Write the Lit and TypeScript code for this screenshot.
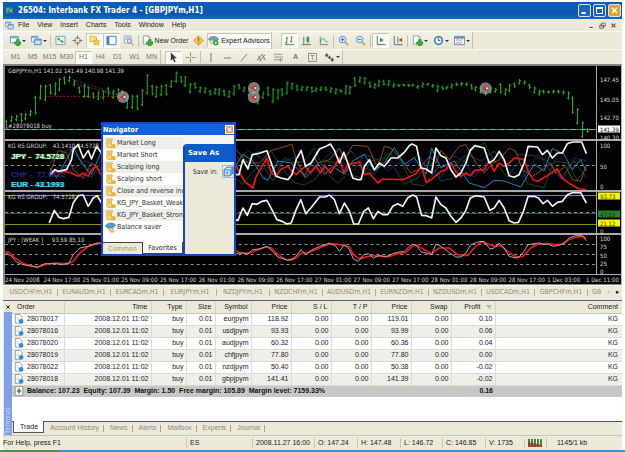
import { LitElement, html, svg, css, nothing, TemplateResult, SVGTemplateResult } from "lit";
import { customElement, state } from "lit/decorators.js";
import { classMap } from "lit/directives/class-map.js";

/* Hourly bars as [high, low] in plot units, three units to a price pixel. */
const BARS = `161,191 149,169 146,166 141,169 141,163 131,151 89,146 56,101 56,106 53,86 49,89 36,76 31,56 29,49 41,61 61,83 53,96 61,96 79,99 76,103 73,101 63,89 71,99 66,96 71,101 86,129 86,129 86,133 69,121 24,86 56,89 59,96 56,91 53,89 41,66 16,51 29,51 29,63 51,83 49,69 61,81 63,83 71,89
66,86 66,89 71,91 73,96 56,89 53,71 61,79 66,91 66,96 66,116 76,99 61,91 66,111 69,101 66,91 46,86 49,71 56,76 59,76 59,76 61,81 63,79 61,76 61,76 63,81 66,86 69,81 56,86 59,86 33,63 31,51 33,56 46,66 51,69 41,63 41,59 41,61 51,66 53,63 53,61 53,63 53,61
56,69 49,66 51,59 53,66 56,79 59,73 59,71 53,69 49,61 47,61 49,61 53,71 59,76 61,83 61,89 61,83 66,81 51,83 66,89 53,79 49,66 39,56 43,56 53,69 61,83 71,89 71,83 73,83 71,83 71,83 73,86 76,101 91,143 126,176 166,216 186,201`
  .split(/\s+/)
  .map((p) => p.split(",").map(Number));

const STRENGTH = [
  { cls: "navy", pts: "135,100 165,70 200,90 240,60 290,80 690,60 730,30 770,50 800,90 840,60 870,50 900,110 940,70 980,34 1010,60 1050,90 1080,40 1110,50 1150,90 1180,66 1215,70 1240,40 1275,90 1310,110 1345,44 1380,60 1410,110 1450,60 1490,40 1520,90 1560,110 1600,40 1640,90 1680,110 1710,50 1747,60" },
  { cls: "green", pts: "135,66 165,40 195,24 230,60 260,110 290,60 690,110 715,130 745,90 775,70 805,120 840,50 870,66 900,60 930,20 960,90 1000,126 1030,100 1070,110 1100,60 1140,50 1170,80 1200,130 1240,110 1275,60 1310,120 1345,112 1400,30 1440,6 1470,60 1510,110 1545,60 1570,128 1620,140 1650,60 1690,66 1720,118 1747,80" },
  { cls: "green", pts: "690,40 720,70 755,34 800,30 830,80 870,126 900,132 935,112 965,60 1000,66 1040,30 1070,66 1110,102 1150,36 1190,60 1225,130 1260,134 1300,80 1350,70 1390,40 1430,60 1470,30 1510,74 1540,40 1590,44 1630,60 1670,112 1710,60 1747,110" },
  { cls: "orange", pts: "135,96 160,28 185,36 205,86 235,111 260,66 285,86 690,21 730,66 765,66 800,28 845,16 862,9 875,56 903,111 940,66 975,56 1005,21 1020,56 1045,13 1090,16 1120,81 1140,16 1160,21 1190,56 1220,96 1245,84 1275,46 1295,66 1310,28 1335,56 1365,16 1385,11 1415,66 1440,96 1465,66 1485,56 1515,21 1535,31 1555,86 1585,106 1615,86 1640,66 1655,96 1685,76 1705,116 1730,121 1747,71" },
  { cls: "teal", pts: "135,80 155,110 185,56 205,18 230,66 260,100 290,30 690,80 715,40 745,60 775,110 790,118 820,60 860,66 900,104 930,50 960,100 985,76 1020,100 1045,60 1080,40 1110,90 1140,66 1170,20 1200,70 1230,50 1265,100 1282,22 1310,80 1350,60 1395,126 1440,140 1470,118 1500,120 1550,138 1590,70 1620,90 1645,22 1680,40 1705,86 1730,56 1747,90" },
  { cls: "red", pts: "135,106 150,91 165,96 180,91 200,96 220,106 235,96 250,106 260,86 275,76 288,101 690,64 700,86 720,121 745,141 755,106 787,51 800,96 815,106 830,84 850,76 862,91 875,101 890,86 903,76 918,96 935,76 948,96 962,76 978,96 1005,51 1018,96 1030,71 1065,63 1080,101 1095,96 1120,126 1135,114 1195,116 1235,98 1252,76 1265,124 1281,116 1310,91 1325,86 1340,66 1355,91 1370,106 1385,96 1398,104 1412,88 1440,86 1455,61 1470,91 1485,66 1500,76 1515,66 1530,51 1560,56 1572,91 1587,116 1601,121 1630,104 1659,84 1674,111 1700,130 1725,144 1747,146" },
  { cls: "white", pts: "135,101 150,86 160,91 185,86 200,56 205,26 220,11 235,51 250,28 260,54 275,16 290,36 690,101 703,101 715,56 730,84 743,41 760,38 787,29 800,66 815,106 830,111 850,116 862,101 875,56 890,28 903,76 920,66 945,24 965,16 978,9 990,28 1005,66 1018,34 1030,66 1045,111 1060,116 1070,116 1080,76 1095,56 1110,86 1125,66 1140,76 1160,51 1180,51 1200,34 1215,14 1223,9 1237,16 1250,81 1265,84 1282,96 1295,21 1310,44 1325,51 1340,86 1355,108 1370,96 1385,66 1398,28 1412,14 1440,21 1455,66 1470,56 1485,31 1500,56 1515,104 1530,109 1545,101 1560,66 1572,16 1600,18 1615,41 1630,28 1645,51 1660,36 1675,36 1690,8 1705,3 1733,3 1747,38" },
];

const GROUP_LINE =
  "133,93 148,55 162,76 175,80 192,76 205,33 220,11 235,9 250,43 265,18 277,11 290,33 675,81 700,85 715,48 728,70 743,35 757,37 772,28 787,25 802,53 817,83 833,88 847,96 860,93 875,53 889,23 904,65 919,48 945,15 963,15 975,9 990,23 1005,65 1020,33 1035,58 1048,96 1062,96 1078,58 1092,48 1107,80 1121,58 1135,68 1150,68 1165,43 1180,35 1195,43 1210,18 1225,9 1237,15 1252,70 1267,71 1282,78 1295,15 1310,38 1325,48 1340,73 1355,91 1370,78 1385,55 1398,18 1415,11 1440,15 1457,55 1470,48 1485,25 1500,48 1515,86 1530,93 1543,91 1558,58 1572,13 1590,13 1603,18 1617,35 1630,25 1645,43 1660,31 1675,28 1690,8 1705,2 1730,2 1747,33";
const WEAK_RED =
  "2,49 15,54 30,69 50,82 65,89 95,96 120,89 150,84 190,86 205,79 225,54 250,34 275,26 290,24 690,44 705,54 735,54 760,44 785,36 800,39 820,59 840,72 860,76 875,69 890,54 915,52 945,39 975,26 995,27 1020,32 1035,36 1047,59 1063,71 1080,67 1105,62 1130,64 1155,64 1180,56 1205,52 1223,34 1235,29 1250,38 1282,56 1305,39 1335,39 1360,59 1390,62 1410,39 1430,21 1450,26 1470,34 1490,32 1510,49 1535,66 1557,64 1580,39 1602,27 1630,26 1650,29 1675,27 1695,14 1715,7 1735,4 1747,9";
const WEAK_GREY =
  "2,54 20,64 35,82 55,89 80,94 100,97 120,86 150,86 175,89 192,84 205,59 225,39 250,34 275,24 690,59 703,54 715,54 730,57 743,44 765,42 787,34 805,49 820,66 850,76 870,69 890,44 903,59 920,46 945,34 975,25 993,32 1005,49 1020,29 1035,44 1047,72 1062,79 1078,59 1092,56 1107,69 1125,61 1145,66 1165,56 1180,52 1200,49 1215,34 1225,27 1237,32 1250,50 1265,54 1282,59 1295,27 1310,34 1330,49 1355,66 1370,66 1385,54 1400,29 1425,20 1440,19 1457,42 1470,39 1485,24 1500,39 1515,64 1535,69 1545,66 1560,49 1572,29 1590,26 1605,24 1620,29 1632,27 1648,34 1665,31 1682,24 1695,9 1715,2 1735,2 1747,17";

const MARKERS = [[355, 93], [748, 66], [748, 94], [1444, 67]];

const TIMES = ["24 Nov 2008", "24 Nov 17:00", "25 Nov 01:00", "25 Nov 09:00", "25 Nov 17:00", "26 Nov 01:00", "26 Nov 09:00", "26 Nov 17:00", "27 Nov 01:00", "27 Nov 09:00", "27 Nov 17:00", "28 Nov 01:00", "28 Nov 09:00", "28 Nov 17:00", "1 Dec 03:00", "1 Dec 11:00"];

const CHART_TABS = ["USDCHFm,H1", "EURAUDm,H1", "EURCADm,H1", "EURJPYm,H1", "NZDJPYm,H1", "NZDCHFm,H1", "AUDUSDm,H1", "EURNZDm,H1", "NZDUSDm,H1", "USDCADm,H1", "GBPCHFm,H1"];

const ORDERS = [
  ["28078017", "2008.12.01 11:02", "buy", "0.01", "eurjpym", "118.92", "0.00", "0.00", "119.01", "0.00", "0.10", "KG"],
  ["28078016", "2008.12.01 11:02", "buy", "0.01", "usdjpym", "93.93", "0.00", "0.00", "93.99", "0.00", "0.06", "KG"],
  ["28078020", "2008.12.01 11:02", "buy", "0.01", "audjpym", "60.32", "0.00", "0.00", "60.36", "0.00", "0.04", "KG"],
  ["28078019", "2008.12.01 11:02", "buy", "0.01", "chfjpym", "77.80", "0.00", "0.00", "77.80", "0.00", "0.00", "KG"],
  ["28078022", "2008.12.01 11:02", "buy", "0.01", "nzdjpym", "50.40", "0.00", "0.00", "50.38", "0.00", "-0.02", "KG"],
  ["28078018", "2008.12.01 11:02", "buy", "0.01", "gbpjpym", "141.41", "0.00", "0.00", "141.39", "0.00", "-0.02", "KG"],
];
const COLUMNS = ["Order", "Time", "Type", "Size", "Symbol", "Price", "S / L", "T / P", "Price", "Swap", "Profit", "Comment"];

const plus = svg`<path d="M7 5h3v2.500h2v2.500h-2v2h-3v-2h-2v-2.500h2z" fill="#2fb52f" stroke="#14801a" stroke-width=".6"/>`;
const page = svg`<path d="M1.500 1h5.500l2 2v7h-7.500z" fill="#fff" stroke="#7d8690" stroke-width=".8"/><path d="M7 1v2h2" fill="none" stroke="#7d8690" stroke-width=".6"/>`;

const ICONS: Record<string, SVGTemplateResult> = {
  newchart: svg`<path d="M.5 1.500h8.500v7h-8.500z" fill="#fff" stroke="#6c8fb0"/><path d="M1 3h8" stroke="#79a7d8" stroke-width="1.500"/>${plus}`,
  profiles: svg`<path d="M.5 1.500h7v6h-7z" fill="#e8f2fc" stroke="#5d93c9"/><path d="M1 2.500h6" stroke="#5d93c9"/><path d="M4 4.500h7v6h-7z" fill="#cfe4f8" stroke="#4785c4"/><path d="M4 5.500h7" stroke="#4785c4"/>`,
  market: svg`<path d="M1 1.500h10v9h-10z" fill="#eaf5fb" stroke="#6d9cc4"/><path d="M3 3.500l2 2M6 6l3 2" stroke="#2c9d3c" stroke-width="1.800"/>`,
  data: svg`<circle cx="6" cy="6" r="3.200" fill="none" stroke="#77736a"/><path d="M6 .5v4M6 7.500v4M.5 6h4M7.500 6h4" stroke="#77736a"/>`,
  folder: svg`<path d="M1 1h3l1 1h3v5h-7z" fill="#ffe680" stroke="#c89a1c" stroke-width=".7"/><path d="M8 4l1.300 2.300 2.500.2-1.800 1.900.5 2.600-2.500-1.200-2.300 1.200.4-2.600-1.800-1.900 2.500-.2z" fill="#ffd23a" stroke="#bb8a10" stroke-width=".6"/>`,
  terminal: svg`<path d="M1 1.500h10v9h-10z" fill="#fff" stroke="#3d7cc8"/><path d="M2.500 2v8" stroke="#3d7cc8" stroke-width="2.500"/>`,
  tester: svg`<path d="M1.500 1h7v8h-7z" fill="#eef2f6" stroke="#8b98a8" stroke-width=".8"/><path d="M3 3h4M3 5h2" stroke="#8b98a8"/><circle cx="7" cy="6.500" r="2.300" fill="#cfe6fa" stroke="#6e8fb4"/><path d="M8.700 8.500l2.500 2.800" stroke="#c8a038" stroke-width="1.300"/>`,
  order: svg`${page}${plus}`,
  diamond: svg`<path d="M6 .8l5.200 5.200-5.200 5.200-5.200-5.200z" fill="#f7c94a" stroke="#c4881a" stroke-width=".8"/><path d="M6 3v3.500M6 7.800v1.200" stroke="#8b5a10" stroke-width="1.300"/>`,
  expert: svg`<path d="M.5 5c1-4 9-5 11 0l-3 1.500-5 .5z" fill="#5aa4e0" stroke="#2b6cae" stroke-width=".6"/><circle cx="4" cy="8" r="2.500" fill="#f1cf86"/><circle cx="8.500" cy="8.500" r="3" fill="#2fae3a"/><path d="M7.500 7l2.500 1.500-2.500 1.500z" fill="#fff"/>`,
  bars: svg`<path d="M3 2v8M1 8.500h2M3 3.500h1.500M8 1.500v7M6.500 7h1.500M8 3h1.500M1 10.500h10" stroke="#3a8a52" fill="none"/>`,
  candle: svg`<path d="M3 2v8M1 10.500h10M7.500 1v8" stroke="#5b6b60" fill="none"/><path d="M6 2.500h3v5h-3z" fill="#1fa838"/>`,
  line: svg`<path d="M2.500 1.500v9h8.500" stroke="#6f7f78" fill="none"/><path d="M2.500 7.500c2-5 4-4 5-2s2 2 3 2" stroke="#2e9a50" fill="none"/>`,
  zoomin: svg`<circle cx="5" cy="5" r="3.600" fill="#d6ebfb" stroke="#5592cf"/><path d="M3.200 5h3.600M5 3.200v3.600" stroke="#2a6db8"/><path d="M8 8l3.200 3.200" stroke="#d0a12e" stroke-width="1.800"/>`,
  zoomout: svg`<circle cx="5" cy="5" r="3.600" fill="#d6ebfb" stroke="#5592cf"/><path d="M3.200 5h3.600" stroke="#2a6db8"/><path d="M8 8l3.200 3.200" stroke="#d0a12e" stroke-width="1.800"/>`,
  scroll: svg`<path d="M2.500 1v9.500h9" stroke="#55665c" fill="none"/><path d="M5.500 3l4 2.500-4 2.500z" fill="#1e9c38"/>`,
  shift: svg`<path d="M2.500 1v9.500h9M6.500 2v7" stroke="#3f6d9c" fill="none"/><path d="M11 3l-3.500 2.500 3.500 2.500z" fill="#cf3a22"/>`,
  indicator: svg`${page}${plus}`,
  clock: svg`<circle cx="6" cy="6" r="5" fill="#2f74c8"/><circle cx="6" cy="6" r="3.400" fill="#f2f8fe"/><path d="M6 3.500v2.700h2" stroke="#1d4f92" fill="none"/>`,
  template: svg`<path d="M.5 1.500h11v9h-11z" fill="#f4f9fe" stroke="#5c8fc6"/><path d="M.5 3h11" stroke="#5c8fc6" stroke-width="1.800"/><path d="M2 6l2-1 2 1 3-1M2 9l2-1 2 1 3-1" stroke="#b3644a" fill="none" stroke-width=".8"/>`,
  cursor: svg`<path d="M3 .5v9l2.200-2 1.600 3.700 1.500-.7-1.600-3.600h3z" fill="#3a3a3a"/>`,
  cross: svg`<path d="M6 .5v4.500M6 7v4.500M.5 6h4.500M7 6h4.500" stroke="#8a877c"/>`,
  vline: svg`<path d="M6.500 1v10" stroke="#77746a"/>`,
  hline: svg`<path d="M2 6.500h8" stroke="#77746a"/>`,
  trend: svg`<path d="M2 10l7-8" stroke="#77746a"/>`,
  channel: svg`<path d="M1 9l6-7M4 10l6-7M3 4l2 6M7 3l3 6" stroke="#77746a" fill="none"/>`,
  fibo: svg`<path d="M1 2.500h9M2 5.500h9M1 8.500h10M8 7v4" stroke="#77746a" stroke-dasharray="2 .6"/>`,
  arrows: svg`<path d="M3 1l2 2.500-2 2.500-2-2.500zM6 4l2 2-2 2-2-2zM9 6l2 2.500-2 2.500-2-2.500z" fill="#5c5a52"/>`,
  doc: svg`<path d="M1.500 .5h5.500l2.500 2.500v8h-8z" fill="#fff" stroke="#5f7186" stroke-width=".8"/><path d="M3 5h4M3 7h3" stroke="#a9bccf" stroke-width=".7"/><circle cx="8.500" cy="8.800" r="2.800" fill="#2a8fd8"/>`,
  balance: svg`<path d="M1.500 .5h9v11h-9z" fill="#f4f4f4" stroke="#777" stroke-width=".8"/><path d="M6 3v6M3.500 6h5" stroke="#1c9a2c" stroke-width="1.800"/>`,
  script: svg`<path d="M2 1h6v1.500h-1v5h4v3h-7c-1.500 0-2-1-2-2z" fill="#f9d766" stroke="#c9972a" stroke-width=".7"/><circle cx="9" cy="9" r="2.200" fill="#e9b43a"/><path d="M3.500 3.500h2.500M3.500 5.500h2.500" stroke="#c9972a" stroke-width=".7"/>`,
  saver: svg`<path d="M.5 4.500c2-4 9-4.500 11-1l-3 3-5 .5z" fill="#4d9bdc" stroke="#245f9c" stroke-width=".6"/><path d="M4 6.500h4.500c.5 3 2 3 1 4.500-3 1-6-1-5.500-4.500z" fill="#efc579" stroke="#b98432" stroke-width=".5"/>`,
  app: svg`<path d="M1 1h10v10h-10z" fill="#1e6a6a"/><path d="M2.500 9v-6h4M3 5.500h3M6 9l4-6M6.500 4l3.500 5" stroke="#9be0c0" fill="none"/>`,
  disk: svg`<path d="M4 1h7v6.500l-3 3.500h-7v-7z" fill="#5aa2e6" stroke="#1f5da8" stroke-width=".7"/><path d="M2 5h5.500v5h-5.500zM4.500 2h5l-1.500 1.500h-5z" fill="#d9eafb"/><path d="M3 6.500h3M3 8h3" stroke="#1f5da8" stroke-width=".7"/>`,
};

const icon = (name: string) =>
  html`<svg class="icon" viewBox="0 0 12 12" aria-hidden="true">${ICONS[name]}</svg>`;

interface Tool { id: string; title: string; text?: string; menu?: boolean; on?: boolean; sep?: boolean; }
const TOOLS: Tool[] = [
  { id: "newchart", title: "New chart", menu: true },
  { id: "profiles", title: "Profiles", menu: true, sep: true },
  { id: "market", title: "Market Watch" },
  { id: "data", title: "Data window" },
  { id: "folder", title: "Navigator", on: true },
  { id: "terminal", title: "Terminal", on: true },
  { id: "tester", title: "Strategy Tester", sep: true },
  { id: "order", title: "New Order", text: "New Order" },
  { id: "diamond", title: "MetaEditor" },
  { id: "expert", title: "Expert Advisors", text: "Expert Advisors", on: true },
];
const CHART_TOOLS: Tool[] = [
  { id: "bars", title: "Bar chart", on: true },
  { id: "candle", title: "Candlesticks" },
  { id: "line", title: "Line chart", sep: true },
  { id: "zoomin", title: "Zoom in" },
  { id: "zoomout", title: "Zoom out", sep: true },
  { id: "scroll", title: "Auto scroll", on: true },
  { id: "shift", title: "Chart shift", sep: true },
  { id: "indicator", title: "Indicators", menu: true },
  { id: "clock", title: "Periods", menu: true },
  { id: "template", title: "Templates", menu: true },
];
const DRAW_TOOLS: Tool[] = [
  { id: "cursor", title: "Cursor", on: true },
  { id: "cross", title: "Crosshair", sep: true },
  { id: "vline", title: "Vertical line" },
  { id: "hline", title: "Horizontal line" },
  { id: "trend", title: "Trendline" },
  { id: "channel", title: "Channel" },
  { id: "fibo", title: "Fibonacci" },
];

@customElement("app-root")
export class AppRoot extends LitElement {
  @state() private period = "H1";
  @state() private tab = "Trade";

  static styles = css`
    :host { display: block; padding: 2px 3px 0; background: #fdfdfb; color: #222;
      font: 7px/12px "Liberation Sans", Arial, sans-serif; white-space: nowrap; }
    * { box-sizing: border-box; }
    button { font: inherit; color: inherit; background: none; border: 0; margin: 0; padding: 0;
      display: inline-flex; align-items: center; justify-content: center; }
    .icon { width: 11px; height: 11px; flex: none; display: block; }

    .title { display: flex; align-items: center; height: 17px; padding: 0 1px 0 2px; gap: 2px;
      background: linear-gradient(#0a5cc0, #0b57ae 70%, #1268d8); color: #fff; }
    .title .icon { width: 9px; height: 9px; }
    .title h1 { flex: 1; margin: 0; padding-left: 2px; font: bold 8px/17px "DejaVu Sans Condensed", "Liberation Sans", sans-serif; }
    .caption { width: 13px; height: 13px; border: 1px solid #d5e2f8; border-radius: 2px; background: #1a64c8; }
    .caption svg { width: 9px; height: 9px; }
    .caption.close { background: #e6a02c; }

    .menu { display: flex; align-items: center; height: 12px; background: #ece9d8; padding: 0 3px 0 2px; }
    .menu .icon { width: 9px; height: 9px; margin-right: 4px; }
    .menu .item { margin-right: 8px; }
    .menu .fill { flex: 1; }
    .mdi { width: 11px; color: #555; }
    .mdi svg { width: 7px; height: 7px; }

    .bar { display: flex; align-items: center; height: 18px; background: #ece9d8; border-top: 1px solid #fbfaf4; }
    .bar.low { height: 15px; }
    .group { display: flex; align-items: center; height: 100%; padding-left: 4px;
      border-right: 1px solid #c5c2b2; background: linear-gradient(#f3f1e6, #e8e5d3); }
    .tool { width: 17px; height: 15px; border: 1px solid transparent; flex: none; }
    .low .tool { height: 13px; color: #77746a; }
    .tool.drop { width: 21px; gap: 1px; }
    .tool.wide { width: 50px; gap: 2px; }
    .tool.wide.on { width: 64px; }
    .bar:not(.low) .group + .group { padding-left: 9px; }
    .tool.on { background: #f8f7f1; border-color: #c9c6b8 #fff #fff #c9c6b8; }
    .drop::after { content: ""; border: 2px solid transparent; border-top-color: #333; border-bottom: 0; }
    .sep { width: 4px; height: 12px; border-left: 1px solid #c5c2b2; margin-left: 1px; margin-right: -2px; }
    .letter { font-weight: bold; }
    .boxed { border: 1px solid #99968a; line-height: 7px; padding: 0 1px; font-weight: normal; }

    .chart { position: relative; background: #020204; border: 1px solid #8a897f; border-left: 2px solid #8a897f;
      border-right: 1px solid #b9b7aa; color: #d6d6d6; font: 6px/8px "DejaVu Sans Condensed", "Liberation Sans", sans-serif; }
    .panel { display: grid; grid-template-columns: 1fr 24px; border-bottom: 2px solid #a9a9ab; }
    .panel.last { border-bottom: 1px solid #a9a9ab; }
    .plot { position: relative; border-right: 1px solid #a9a9ab; min-width: 0; }
    .plot svg { display: block; width: 100%; }
    .price { border-top: 1px solid #77787a; }
    .price .plot svg { height: 73px; }
    .rs .plot svg { height: 49px; }
    .group-panel .plot svg { height: 41px; }
    .last .plot svg { height: 39px; }
    .axis { position: relative; }
    .axis span { position: absolute; left: 3px; line-height: 7px; transform: translateY(-50%); }
    .axis .box { left: 1px; right: 1px; padding-left: 2px; background: #fff; color: #111; }
    .axis .yellow { background: #f5f500; color: #443; }
    .axis .dark { background: #2d7d2d; color: #0d330d; }
    .note { position: absolute; left: 3px; top: 1px; white-space: pre; }
    .note.bottom { top: auto; bottom: 9px; }
    .legend { position: absolute; left: 6px; top: 11px; font: bold 8px/10px "Liberation Sans", sans-serif; }
    .legend div { white-space: pre; }
    .l-jpy { color: #e8f5e8; text-shadow: 1px 0 1px #2f9a40, -1px 0 1px #2f9a40; margin-bottom: 8px; }
    .l-chf { color: #1b2c86; }
    .l-eur { color: #35e6f2; text-shadow: 1px 0 0 #1878a8; }
    .times { display: grid; grid-template-columns: repeat(15, minmax(0, 1fr)) 35px; height: 9px; align-items: center; }
    .times span { overflow: visible; }

    polyline { fill: none; stroke-width: 3; stroke-linejoin: round; }
    .white { stroke: #f2f2f2; stroke-width: 5; }
    .red { stroke: #f01414; stroke-width: 5; }
    .orange { stroke: #8c4c16; }
    .teal { stroke: #1c86b8; }
    .green { stroke: #17452c; }
    .navy { stroke: #16246e; }
    .grey { stroke: #a8a8a8; }
    .crisp { shape-rendering: crispEdges; }

    .navigator { position: absolute; left: 96px; top: 57px; width: 135px; height: 134px; border: 2px solid #1445d2;
      background: #f5f4ee; color: #333; font: 7px/12px "DejaVu Sans Condensed", "Liberation Sans", sans-serif; display: flex; flex-direction: column; }
    .navigator header { display: flex; align-items: center; justify-content: space-between; height: 11px;
      background: #0f62e0; color: #fff; font-weight: bold; flex: none; }
    .navigator .x { width: 9px; height: 9px; background: #f0a040; border: 1px solid #fff; color: #fff; }
    .navigator .x svg { width: 7px; height: 7px; }
    .body { flex: 1; display: grid; grid-template-columns: 80px 1fr; min-height: 0; }
    .left { display: flex; flex-direction: column; min-width: 0; background: #fdfdfb; padding-top: 2px; }
    .left ul { margin: 0; padding: 0; list-style: none; flex: 1; }
    .left li { display: flex; align-items: center; gap: 1px; height: 12px; padding-left: 2px; }
    .left li:nth-child(odd):not(:last-child) { background: #eeeeea; }
    .pages { display: flex; border-top: 1px solid #444; background: #ece9d8; height: 12px; }
    .pages button { flex: 1; color: #9c998c; }
    .pages .active { background: #fdfdfb; color: #222; border: 1px solid #444; border-top: 0; margin-top: -1px; }
    .save { margin-top: 9px; background: #ece9d8; border-left: 2px solid #1445d2; border-top-left-radius: 4px; overflow: hidden; }
    .save h2 { margin: 0; height: 18px; padding-left: 3px; background: #0d5bc4; color: #fff;
      font: bold 7px/18px "DejaVu Sans", "Liberation Sans", sans-serif; }
    .save label { display: flex; align-items: center; justify-content: flex-end; gap: 4px; margin-top: 3px; }
    .save .pick { width: 12px; height: 13px; border: 1px solid #9fb4cf; background: #fff; }

    .tabs { display: flex; align-items: center; height: 16px; background: #ece9d8; color: #8f8b7e; padding: 0 0 2px 2px;
      border-top: 1px solid #fff; border-bottom: 1px solid #5a5a8c; overflow: hidden;
      font-family: "DejaVu Sans Condensed", "Liberation Sans", sans-serif; }
    .tabs button { width: 53px; flex: 0 1 53px; border-right: 1px solid #b1ae9f; line-height: 7px; }
    .tabs .cut { flex: 1; justify-content: flex-start; padding-left: 4px; border: 0; }
    .tabs .arrow { flex: 0 0 9px; border: 0; }
    .tabs .fwd { color: #111; }

    .term { display: grid; grid-template-columns: 9px 1fr; background: #fff; }
    .side { display: flex; flex-direction: column; align-items: center; background: #ece9d8; }
    .side button { height: 11px; width: 8px; color: #222; }
    .side svg { width: 6px; height: 6px; }
    .side span { flex: 1; width: 8px; writing-mode: vertical-rl; transform: rotate(180deg); background: #7f9fe6;
      color: #c4d4f8; line-height: 8px; padding-top: 1px; }
    .main { min-width: 0; display: flex; flex-direction: column; }
    table { width: 100%; border-collapse: collapse; table-layout: fixed; }
    th { height: 12px; padding: 0 3px 0 0; background: #ece9d8; font-weight: normal; text-align: right;
      border-bottom: 1px solid #c9c6b6; border-right: 1px solid #d6d3c4; line-height: 10px; }
    td { height: 12px; padding: 0 2px 0 0; text-align: right; border-right: 1px solid #dedcd2;
      border-bottom: 1px solid #dcdad0; line-height: 10px; }
    th:first-child { text-align: left; padding-left: 5px; }
    td:first-child { text-align: left; padding-left: 2px; }
    th:last-child, td:last-child { border-right: 0; padding-right: 4px; }
    tbody tr:nth-child(even) { background: #efefea; }
    tfoot tr { background: #c6c8c6; font-weight: bold; color: #111; }
    tfoot td { border: 0; height: 12px; }
    .cell { display: flex; align-items: center; gap: 3px; white-space: pre; }
    .cell .icon { width: 10px; height: 10px; }
    .sort { display: inline-block; border: 3px solid transparent; border-top: 4px solid #b9b6a8; border-bottom: 0; margin-left: 5px; }
    .c-order { width: 52px; } .c-time { width: 87px; } .c-type { width: 35px; } .c-size { width: 29px; }
    .c-symbol { width: 36px; } .c-num { width: 40px; } .c-profit { width: 44px; }
    .blank { height: 24px; }
    .pane-tabs { display: flex; height: 14px; background: #ece9d8; border-top: 1px solid #4a4f96; color: #8f8b7e; align-items: flex-start; padding-left: 1px; }
    .pane-tabs button { height: 10px; margin-top: 1px; padding: 0 5px 0 6px; line-height: 8px; position: relative; }
    .pane-tabs button:not(.active)::after { content: ""; width: 1px; height: 7px; background: #a5a294; position: absolute; right: 0; top: 2px; }
    .pane-tabs .active { background: #fff; color: #222; border: 1px solid #55554f; border-top: 0; height: 12px; margin-top: -1px; }

    .status { display: grid; grid-template-columns: minmax(0, 1fr) 66px 62px 43px 43px 42px 43px 39px 22px 76px;
      height: 15px; align-items: center; background: #ece9d8; border-top: 1px solid #c9c6b6; }
    .status span { border-left: 1px solid #c9c6b6; padding-left: 3px; line-height: 10px; }
    .status span:first-child { border: 0; padding: 0; }
    .status .kb { padding-left: 10px; }
    .status svg { width: 14px; height: 8px; display: block; }
    .taskbar { height: 2px; margin: 0 -3px; background: linear-gradient(90deg, #3c9c3c 58px, #17a0e6 60px); }
  `;

  private tools(list: Tool[]): TemplateResult[] {
    return list.map((t) => html`<button
        class=${classMap({ tool: true, on: !!t.on, drop: !!t.menu, wide: !!t.text })}
        title=${t.title} aria-label=${t.title}>${icon(t.id)}${t.text ?? nothing}</button>${t.sep
        ? html`<i class="sep"></i>` : nothing}`);
  }

  private dash(y: number, color = "#8f8f96") {
    return svg`<path class="crisp" d="M0 ${y}H1776" stroke=${color} stroke-width="3" stroke-dasharray="9 9"/>`;
  }

  private axis(labels: [string, number, string?][]) {
    return html`<div class="axis">${labels.map(([t, pos, cls]) =>
      html`<span class=${cls ?? ""} style="top:${pos}%">${t}</span>`)}</div>`;
  }

  private priceBars() {
    return BARS.map(([hi, lo], i) => {
      const x = 3 + Math.round((i * 14.55) / 3) * 3 + 1.5;
      const up = i % 3 !== 0;
      const open = up ? lo - 5 : hi + 5;
      const close = up ? hi + 5 : lo - 5;
      return svg`<path d="M${x} ${hi}V${lo}M${x - 4.5} ${open}H${x}M${x} ${close}H${x + 4.5}"/>`;
    });
  }

  private x(color: string) {
    return html`<svg viewBox="0 0 9 9" aria-hidden="true"><path d="M2 2l5 5M7 2l-5 5" stroke=${color} stroke-width="1.500"/></svg>`;
  }

  private renderChart() {
    return html`<main class="chart">
      <section class="panel price">
        <div class="plot">
          <svg viewBox="0 0 1776 219" preserveAspectRatio="none">
            <path d="M120 91H355M205 51L355 91" stroke="#a02020" stroke-width="3" stroke-dasharray="6 5" fill="none"/>
            <path d="M205 41L355 89" stroke="#20309a" stroke-width="3" stroke-dasharray="6 5"/>
            <path class="crisp" d="M0 190.500H1776" stroke="#3f8c6c" stroke-width="3"/>
            <path class="crisp" d="M0 190.500H1776" stroke="#8ab8a4" stroke-width="3" stroke-dasharray="15 12"/>
            <g class="crisp" stroke="#22b422" stroke-width="3" fill="none">${this.priceBars()}</g>
            ${MARKERS.map(([x, y]) => svg`<circle cx=${x} cy=${y} r="18" fill="#a5a0a0" fill-opacity=".75"/>
              <path d="M${x - 9} ${y}l14 -9v18z" fill="#e62020"/><circle cx=${x + 4} cy=${y} r="3" fill="#fff"/>`)}
          </svg>
          <span class="note">GBPJPYm,H1 141.02 141.49 140.98 141.39</span>
          <span class="note bottom">#28078018 buy</span>
        </div>
        ${this.axis([["147.45", 18], ["145.05", 45], ["142.70", 70], ["140.30", 97], ["141.39", 86, "box"]])}
      </section>
      <section class="panel rs">
        <div class="plot">
          <svg viewBox="0 0 1776 147" preserveAspectRatio="none">
            ${this.dash(73.5)}
            ${STRENGTH.map((s) => svg`<polyline class=${s.cls} points=${s.pts}/>`)}
          </svg>
          <span class="note">KG RS GROUP:   43.1410 74.5728</span>
          <div class="legend">
            <div class="l-jpy">JPY -  74.5728</div>
            <div class="l-chf">CHF -  77.6612</div>
            <div class="l-eur">EUR - 43.1993</div>
          </div>
        </div>
        ${this.axis([["100", 8], ["50", 50], ["0", 92]])}
      </section>
      <section class="panel group-panel">
        <div class="plot">
          <svg viewBox="0 0 1776 123" preserveAspectRatio="none">
            <path class="crisp" d="M0 10.500H1776M0 97.500H1776" stroke="#8f8f10" stroke-width="3"/>
            ${this.dash(61.5)}
            <path class="crisp" d="M0 64.500H1776" stroke="#1d5c2c" stroke-width="3"/>
            <polyline class="white" points=${GROUP_LINE}/>
          </svg>
          <span class="note">KG RS GROUP:   74.5728</span>
        </div>
        ${this.axis([["93.73", 10, "box yellow"], ["47.52", 54, "box dark"], ["21.12", 76, "box yellow"], ["0", 96]])}
      </section>
      <section class="panel last">
        <div class="plot">
          <svg viewBox="0 0 1776 117" preserveAspectRatio="none">
            ${this.dash(28.5)}${this.dash(58.5)}${this.dash(88.5)}
            <polyline class="red" points=${WEAK_RED}/>
            <polyline class="grey" points=${WEAK_GREY}/>
          </svg>
          <span class="note">JPY : [WEAK ]     93.59 85.10</span>
        </div>
        ${this.axis([["100", 8], ["75", 28], ["50", 50], ["25", 73], ["0", 92]])}
      </section>
      <div class="times">${TIMES.map((t) => html`<span>${t}</span>`)}</div>
      ${this.renderNavigator()}
    </main>`;
  }

  private renderNavigator() {
    const items = ["Market Long", "Market Short", "Scalping long", "Scalping short", "Close and reverse indi", "KG_JPY_Basket_Weak", "KG_JPY_Basket_Stron"];
    return html`<aside class="navigator">
      <header>Navigator<button class="x" aria-label="Close navigator">${this.x("#fff")}</button></header>
      <div class="body">
        <div class="left">
          <ul>${items.map((t) => html`<li>${icon("script")}${t}</li>`)}<li>${icon("saver")}Balance saver</li></ul>
          <div class="pages"><button>Common</button><button class="active">Favorites</button></div>
        </div>
        <div class="save">
          <h2>Save As</h2>
          <label>Save in: <button class="pick" aria-label="Choose folder">${icon("disk")}</button></label>
        </div>
      </div>
    </aside>`;
  }

  private renderTerminal() {
    const cols = ["order", "time", "type", "size", "symbol", "num", "num", "num", "num", "num", "profit"];
    return html`<section class="term">
      <div class="side"><button aria-label="Close terminal">${this.x("#222")}</button><span>Terminal</span></div>
      <div class="main">
        <table>
          <colgroup>${cols.map((c) => html`<col class="c-${c}">`)}<col></colgroup>
          <thead><tr>${COLUMNS.map((c) => html`<th scope="col">${c}${c === "Profit" ? html`<i class="sort"></i>` : nothing}</th>`)}</tr></thead>
          <tbody>${ORDERS.map((row) => html`<tr>${row.map((v, i) => i === 0
            ? html`<td><div class="cell">${icon("doc")}${v}</div></td>` : html`<td>${v}</td>`)}</tr>`)}</tbody>
          <tfoot><tr>
            <td colspan="10"><div class="cell">${icon("balance")}Balance: 107.23  Equity: 107.39  Margin: 1.50  Free margin: 105.89  Margin level: 7159.33%</div></td>
            <td>0.16</td><td></td>
          </tr></tfoot>
        </table>
        <div class="blank"></div>
        <nav class="pane-tabs">${["Trade", "Account History", "News", "Alerts", "Mailbox", "Experts", "Journal"].map((t) =>
          html`<button class=${classMap({ active: t === this.tab })} @click=${() => (this.tab = t)}>${t}</button>`)}</nav>
      </div>
    </section>`;
  }

  render() {
    return html`
      <header class="title">${icon("app")}<h1>26504: Interbank FX Trader 4 - [GBPJPYm,H1]</h1>
        <button class="caption" aria-label="Minimize"><svg viewBox="0 0 9 9"><path d="M1.500 7h4" stroke="#fff" stroke-width="2"/></svg></button>
        <button class="caption" aria-label="Maximize"><svg viewBox="0 0 9 9"><path d="M1.500 2h6v5.500h-6z" fill="none" stroke="#fff"/><path d="M1 2h7" stroke="#fff" stroke-width="2"/></svg></button>
        <button class="caption close" aria-label="Close">${this.x("#fff")}</button>
      </header>
      <nav class="menu">${icon("profiles")}
        ${["File", "View", "Insert", "Charts", "Tools", "Window", "Help"].map((m) => html`<button class="item">${m}</button>`)}
        <span class="fill"></span>
        <button class="mdi" aria-label="Minimize chart"><svg viewBox="0 0 9 9"><path d="M2 7h4" stroke="#555" stroke-width="1.500"/></svg></button>
        <button class="mdi" aria-label="Restore chart"><svg viewBox="0 0 9 9"><path d="M3 1.500h5v4h-5zM1 4h5v4h-5z" fill="#ece9d8" stroke="#555"/></svg></button>
        <button class="mdi" aria-label="Close chart">${this.x("#555")}</button>
      </nav>
      <div class="bar"><div class="group">${this.tools(TOOLS)}</div><div class="group">${this.tools(CHART_TOOLS)}</div></div>
      <div class="bar low">
        <div class="group">${["M1", "M5", "M15", "M30", "H1", "H4", "D1", "W1", "MN"].map((p) =>
          html`<button class=${classMap({ tool: true, on: p === this.period })} @click=${() => (this.period = p)}>${p}</button>`)}</div>
        <div class="group">${this.tools(DRAW_TOOLS)}
          <button class="tool letter" title="Text">A</button>
          <button class="tool" title="Text label"><span class="boxed">T</span></button>
          <button class="tool drop" title="Arrows" aria-label="Arrows">${icon("arrows")}</button>
        </div>
      </div>
      ${this.renderChart()}
      <nav class="tabs">${CHART_TABS.map((t) => html`<button>${t}</button>`)}<button class="cut">GB</button>
        <button class="arrow" aria-label="Scroll left">‹</button><button class="arrow fwd" aria-label="Scroll right">▸</button></nav>
      ${this.renderTerminal()}
      <footer class="status">
        <span>For Help, press F1</span><span>ES</span><span>2008.11.27 16:00</span>
        <span>O: 147.24</span><span>H: 147.48</span><span>L: 146.72</span><span>C: 146.85</span><span>V: 1735</span>
        <span><svg viewBox="0 0 14 8"><path d="M1 0v8M4 0v8M7 0v8M10 0v8M13 0v8" stroke="#3c8c3c" stroke-width="2"/><path d="M0 3l14 3v2H0z" fill="#b02a1c" fill-opacity=".8"/></svg></span>
        <span class="kb">1145/1 kb</span>
      </footer>
      <div class="taskbar"></div>`;
  }
}
